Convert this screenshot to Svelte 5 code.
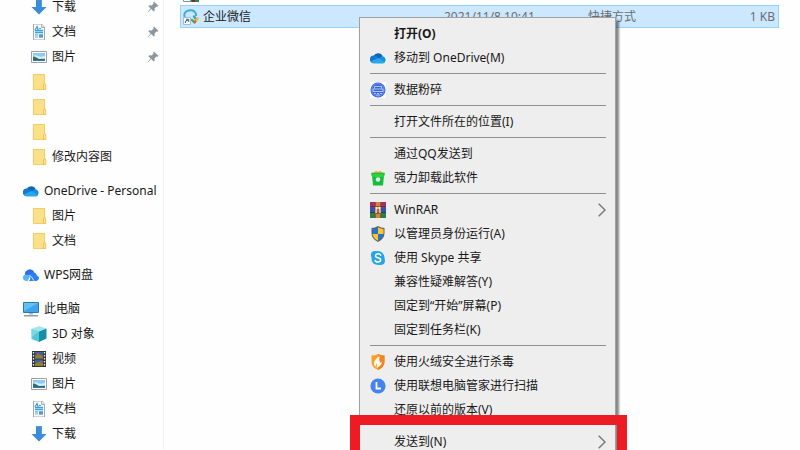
<script lang="ts">
  type Place = { label: string; icon: string; pinned?: boolean; root?: boolean };
  type Item = { label: string; icon?: string; bold?: boolean; sub?: boolean };

  const groups: Place[][] = [
    [
      { label: "下载", icon: "download", pinned: true },
      { label: "文档", icon: "doc", pinned: true },
      { label: "图片", icon: "picture", pinned: true },
      { label: "", icon: "folder" },
      { label: "", icon: "folder" },
      { label: "", icon: "folder" },
      { label: "修改内容图", icon: "folder" }
    ],
    [
      { label: "OneDrive - Personal", icon: "onedrive", root: true },
      { label: "图片", icon: "folder" },
      { label: "文档", icon: "folder" }
    ],
    [{ label: "WPS网盘", icon: "wps", root: true }],
    [
      { label: "此电脑", icon: "pc", root: true },
      { label: "3D 对象", icon: "cube" },
      { label: "视频", icon: "video" },
      { label: "图片", icon: "picture" },
      { label: "文档", icon: "doc" },
      { label: "下载", icon: "download" }
    ]
  ];

  const menu: Item[][] = [
    [
      { label: "打开(O)", bold: true },
      { label: "移动到 OneDrive(M)", icon: "onedrive" }
    ],
    [{ label: "数据粉碎", icon: "shred" }],
    [{ label: "打开文件所在的位置(I)" }],
    [
      { label: "通过QQ发送到" },
      { label: "强力卸载此软件", icon: "bin" }
    ],
    [
      { label: "WinRAR", icon: "winrar", sub: true },
      { label: "以管理员身份运行(A)", icon: "shield" },
      { label: "使用 Skype 共享", icon: "skype" },
      { label: "兼容性疑难解答(Y)" },
      { label: "固定到“开始”屏幕(P)" },
      { label: "固定到任务栏(K)" }
    ],
    [
      { label: "使用火绒安全进行杀毒", icon: "huorong" },
      { label: "使用联想电脑管家进行扫描", icon: "lenovo" },
      { label: "还原以前的版本(V)" }
    ],
    [{ label: "发送到(N)", sub: true }]
  ];

  let selected = $state(true);
</script>

{#snippet icon(name: string)}
  <svg class="icon" viewBox="0 0 16 16" aria-hidden="true">
    {#if name === "download"}
      <path d="M5 0h6v8h4.5L8 15.6.5 8H5z" fill="#3a8bd8" />
      <path d="M5.6.6h4.8v8" fill="none" stroke="#5aa5e8" stroke-width=".8" />
    {:else if name === "doc"}
      <path d="M2.500 0h8l3 3v13h-11z" fill="#fbfcfd" stroke="#9a9fa4" stroke-width=".9" />
      <path d="M10.500.5v3h3" fill="#e6e9ec" stroke="#9a9fa4" stroke-width=".8" />
      <path d="M4 6 6 2.500 7.200 6M8 4.500h2" fill="none" stroke="#3f9fe0" stroke-width="1.200" />
      <path d="M4 6.500h8M4 8.500h8" stroke="#35a0e4" stroke-width="1.400" />
      <path d="M4 10.800h3M4 13h3" stroke="#55aee6" stroke-width="1.200" />
      <path d="M8 10.200h4v3.500H8z" fill="#5b9bc9" />
    {:else if name === "picture"}
      <path d="M.5 2.500h15v11H.5z" fill="#fff" stroke="#9aa2a9" />
      <path d="M2 4h12v8H2z" fill="#8fcaf4" />
      <path d="M2 7c2-1 3-1 5 0s4 1 7 0v3H2z" fill="#d9edf7" />
      <path d="M2 7.500c3 0 4 1.500 6 2.500l6-.3V12H2z" fill="#2c6f6d" />
      <path d="M2 11h12v1H2z" fill="#3a76ae" />
    {:else if name === "folder"}
      <path d="M2 0h12v10l.8 1v5H2z" fill="#fbe08a" />
      <path d="M2.400.4h11.200v10l-1 1V15.600H2.400z" fill="none" stroke="#edc55c" stroke-width=".8" />
      <path d="M12.500 15.500V10.500l1.500-1 .8 1.500v4.500z" fill="#ffe594" stroke="#e6b847" stroke-width=".7" />
    {:else if name === "onedrive"}
      <path d="M3.500 6a5.200 5.200 0 0 1 9.300.2L8 10.500z" fill="#0f63b8" />
      <path d="M3.500 13A3.700 3.700 0 0 1 3.700 5.500q1.900-.2 3.300.8l6 5.700z" fill="#1878cf" />
      <path d="M8.500 8.500 12 6.200a3.600 3.600 0 0 1 2.300 6.300H10z" fill="#1390df" />
      <path d="M.8 11.500 8.500 8 15 12q-.8 1.500-2.500 1.500H3.800Q1.600 13.500.8 11.500" fill="#28a8ea" />
    {:else if name === "wps"}
      <path d="M2 8a4 4 0 0 1 2.800-5 4.400 4.400 0 0 1 6.500 2.500L8 9z" fill="#2b6fe6" />
      <path d="M3 14a3.200 3.200 0 0 1-1-6.200q3-.8 5 1.700l-2.500 4.500z" fill="#58b2fb" />
      <path d="M6 14Q8.500 11.500 6.500 8.500 8.500 4.200 12 5.700 13.800 6.700 13.800 8.500 16.200 9.300 16 11.600 15.500 14 13 14z" fill="#2d80f3" />
      <path d="M6.300 8.200Q8.600 9 11 13.800" fill="none" stroke="#fff" stroke-width=".8" />
    {:else if name === "pc"}
      <path d="M.5 1.500h15v10H.5z" fill="#3ea5ec" stroke="#287cae" />
      <path d="M1 2h14L1 10z" fill="#66bff7" />
      <path d="M6 12h4v1.500H6z" fill="#a9b6bf" />
      <path d="M1 14h14v1.500H1z" fill="#8d9ca7" />
    {:else if name === "cube"}
      <path d="m8 0 7.500 2.500L8 5.500.5 3z" fill="#a3e7ee" />
      <path d="M.5 3 8 5.500V16L.5 13z" fill="#54c6d6" />
      <path d="m8 5.500 7.500-3V12.500L8 16z" fill="#138fa6" />
      <path d="M.5 3 8 5.500 1 11z" fill="#77d9e3" />
    {:else if name === "video"}
      <path d="M1 0h14v16H1z" fill="#343434" />
      <path d="M4 1h8v6.500H4zM4 8.500h8V15H4z" fill="#3b62a8" />
      <path d="M4 5.500q4-4 8 0v2H4zM4 13q4-4 8-1v3H4z" fill="#8a8430" />
      <path d="M6 2h2v2H6zM9 10h2v2H9z" fill="#c9503c" />
      <path d="M2.500 1v15M13.500 1v15" stroke="#eee" stroke-width="1.300" stroke-dasharray="1.500 1.500" />
    {:else if name === "shred"}
      <path d="M0 0h16v16H0z" fill="#fafbff" />
      <circle cx="8" cy="8" r="7.500" fill="#3563dc" />
      <circle cx="8" cy="8" r="6.200" fill="none" stroke="#9cb7f6" stroke-width=".6" />
      <path d="M4.500 6.500v-2h7v2M3 7h10v2.500H3z" fill="none" stroke="#d5e1ff" stroke-width=".8" />
      <path d="M4 11.500h2M7 11.500h2M10 11.500h2M6 13h4" stroke="#d5e1ff" stroke-width=".8" />
    {:else if name === "bin"}
      <path d="M3 3 6 .8l2 1 2-1L13.500 3z" fill="#f2b536" />
      <path d="M1.300 2.800h13.400v2.700h-.7L13 15.500H3L2 5.500h-.7z" fill="#17bd3c" />
      <path d="M2.500 4h11l-.3 3H2.800z" fill="#28d34a" />
      <circle cx="8" cy="9.500" r="2.200" fill="#e9fbe9" />
    {:else if name === "winrar"}
      <path d="M0 0h16v5.300H0z" fill="#a52e62" />
      <path d="M0 5.300h16v5.300H0z" fill="#3153b0" />
      <path d="M0 10.600h16V16H0z" fill="#258044" />
      <path d="M0 5h16M0 10.500h16" stroke="#222b42" stroke-width=".8" />
      <path d="M5 0h6v16H5z" fill="#a35122" />
      <path d="M6 1h4M6 3h4M6 13h4M6 15h4" stroke="#f2bf67" />
      <path d="M5.500 5v6h1.200V7h2.600v4h1.200V5" fill="#fff2df" />
      <path d="M7.500 5h1v5h-1z" fill="#b38b42" />
    {:else if name === "shield"}
      <path d="M8 0q3 2 6.500 2v5q0 6-6.500 9Q1.500 13 1.500 7V2Q5 2 8 0" fill="#5d6268" />
      <path d="M8 1.200V8H2.500V3Q5.500 2.800 8 1.200" fill="#2374cc" />
      <path d="M8 1.200V8h5.500V3Q10.500 2.800 8 1.200" fill="#fbc52e" />
      <path d="M2.500 8H8v6.800Q3.200 12.400 2.500 8" fill="#fbc52e" />
      <path d="M13.500 8H8v6.800q4.800-2.400 5.500-6.800" fill="#2374cc" />
    {:else if name === "skype"}
      <path d="M5 1Q14 0 14.500 8q2 7-4.500 7Q1 15.500 1.500 8-.5 1 5 1" fill="#27a4e8" />
      <path d="M10.700 5.200Q10.200 3.800 8 3.800T5.500 5.700Q5.500 7.300 8 7.800t2.600 2.200Q10.500 12 8 12T5.200 10.500" fill="none" stroke="#fff" stroke-width="1.500" stroke-linecap="round" />
    {:else if name === "huorong"}
      <path d="M8 0q3 1.600 6.500 1.600V8q0 5-6.500 8-6.500-3-6.500-8V1.600Q5 1.600 8 0" fill="#f9a12c" />
      <path d="M8 0q3 1.600 6.500 1.600V8q0 5-6.500 8z" fill="#f0842b" />
      <path d="M9.500 2Q5 5 4 8.500 3.500 11 5.500 13 5.700 10.500 7 9 7 11.500 6.500 14 11.500 12 12 7.500L10.500 9Q8.500 6 9.500 2" fill="#fff8e9" />
    {:else if name === "lenovo"}
      <circle cx="8" cy="8" r="7.600" fill="#4483f2" />
      <path d="M6.500 4v6.500h4.500" fill="none" stroke="#fff" stroke-width="1.800" />
    {:else if name === "wecom"}
      <path d="M1.800 8.500Q0 3 5.500 1.500 11 0 13 5v2" fill="none" stroke="#3aafe0" stroke-width="2" />
      <path d="M9 11l2.500 2.500" stroke="#27b36a" stroke-width="2.300" stroke-linecap="round" />
      <path d="m11 7.500 1.500 2" stroke="#3f9be0" stroke-width="2.300" stroke-linecap="round" />
      <path d="m12 13 .5-1" stroke="#ee5136" stroke-width="2.300" stroke-linecap="round" />
      <path d="m13.500 11 1-1.500" stroke="#f9b52a" stroke-width="2.300" stroke-linecap="round" />
      <path d="M.5 8.500h7v7h-7z" fill="#fff" stroke="#a9bac8" />
      <path d="M2.200 14q0-3 3-3M3.200 10.300h2.500v2.500" fill="none" stroke="#29569c" />
    {:else if name === "app"}
      <path d="M4 2h12v14H4z" fill="#33814b" />
      <path d="M9 2h3v14H9z" fill="#7e2a2a" />
      <path d="M.5 8.500h7v7h-7z" fill="#fff" stroke="#8d9499" />
    {/if}
  </svg>
{/snippet}

<div class="explorer">
  <nav>
    {#each groups as group}
      <ul>
        {#each group as p}
          <li>
            <a href="#place" class:root={p.root} aria-label={p.label || "文件夹"}>
              {@render icon(p.icon)}
              <span>{p.label}</span>
              {#if p.pinned}
                <svg class="pin" viewBox="0 0 12 12" aria-hidden="true">
                  <path d="M7 .5 11.500 5l-1.200.8-.8-.3-2 2 .2 2.200-1 .8-2.500-2.400L.8 11.500.5 11.200 3.600 7.600 1.400 5.300l.9-1 2.300.2 2-2L6.200 1.500z" fill="#8b969e" />
                </svg>
              {/if}
            </a>
          </li>
        {/each}
      </ul>
    {/each}
  </nav>

  <main>
    <table>
      <tbody>
        <tr>
          <td class="name"><div>{@render icon("app")}</div></td>
          <td class="date">2021/11/8 10:41</td>
          <td></td>
          <td class="size"></td>
        </tr>
        <tr class:selected onclick={() => (selected = true)}>
          <td class="name"><div>{@render icon("wecom")}企业微信</div></td>
          <td class="date">2021/11/8 10:41</td>
          <td>快捷方式</td>
          <td class="size">1 KB</td>
        </tr>
      </tbody>
    </table>
  </main>

  <div class="menu" role="menu">
    {#each menu as section}
      <div class="section">
        {#each section as item}
          <button type="button" role="menuitem" class:bold={item.bold}>
            <span class="slot">
              {#if item.icon}{@render icon(item.icon)}{/if}
            </span>
            <span class="label">{item.label}</span>
            {#if item.sub}
              <svg class="arrow" viewBox="0 0 8 14" aria-hidden="true">
                <path d="m.7.7 6.300 6.300-6.300 6.300" fill="none" stroke="#777" stroke-width="1.400" />
              </svg>
            {/if}
          </button>
        {/each}
      </div>
    {/each}
  </div>
  <div class="highlight"></div>
</div>

<style>
  :global(body) { background: #fefefe; }
  .explorer {
    position: relative;
    display: flex;
    height: 100vh;
    overflow: hidden;
    color: #191919;
    font: 12px/16px "Noto Sans", "Noto Sans CJK SC", sans-serif;
  }
  .icon { display: block; width: 16px; height: 16px; flex: none; }

  nav { flex: none; width: 163px; margin-top: -6px; border-right: 1px solid #f2f2f2; }
  ul { list-style: none; margin: 0 0 9px; padding: 0; }
  nav a {
    display: flex;
    align-items: center;
    gap: 5px;
    height: 25px;
    padding: 0 4px 0 31px;
    color: inherit;
    text-decoration: none;
    white-space: nowrap;
  }
  nav a.root { padding: 0 0 0 23px; }
  nav span { flex: 1; }
  .pin { width: 12px; height: 12px; }

  main { flex: 1; margin-top: -18px; padding: 0 21px 0 16px; }
  table { width: 100%; table-layout: fixed; border-collapse: collapse; }
  td { height: 23px; padding: 0; color: #6d6d6d; white-space: nowrap; }
  .name { width: 264px; color: #191919; }
  .name div { display: flex; align-items: center; gap: 4px; padding-left: 3px; }
  .date { width: 144px; }
  .size { width: 60px; padding-right: 4px; text-align: right; }
  .selected { background: #cce8ff; outline: 1px solid #99d1ff; outline-offset: -1px; }

  .menu {
    position: absolute;
    left: 359px;
    top: 17px;
    box-sizing: border-box;
    width: 257px;
    padding: 4px 2px 3px;
    background: #eee;
    border: 1px solid #a0a0a0;
    box-shadow: 3px 3px 2px #0007;
  }
  .section + .section::before {
    content: "";
    display: block;
    height: 1px;
    margin: 3px 7px 4px 8px;
    background: #909090;
  }
  .section:last-child::before { background: none; }
  button {
    display: flex;
    align-items: center;
    width: 100%;
    height: 24px;
    padding: 0 7px 0 8px;
    border: 0;
    background: none;
    color: inherit;
    font: inherit;
    text-align: left;
    white-space: nowrap;
  }
  button:hover { background: #fff; }
  .slot { width: 24px; flex: none; }
  .label { flex: 1; }
  .bold { font-weight: 700; }
  .arrow { width: 8px; height: 14px; }

  .highlight {
    position: absolute;
    left: 350px;
    top: 415px;
    box-sizing: border-box;
    width: 277px;
    height: 60px;
    border: 10px solid #ed1c24;
    pointer-events: none;
  }
</style>
